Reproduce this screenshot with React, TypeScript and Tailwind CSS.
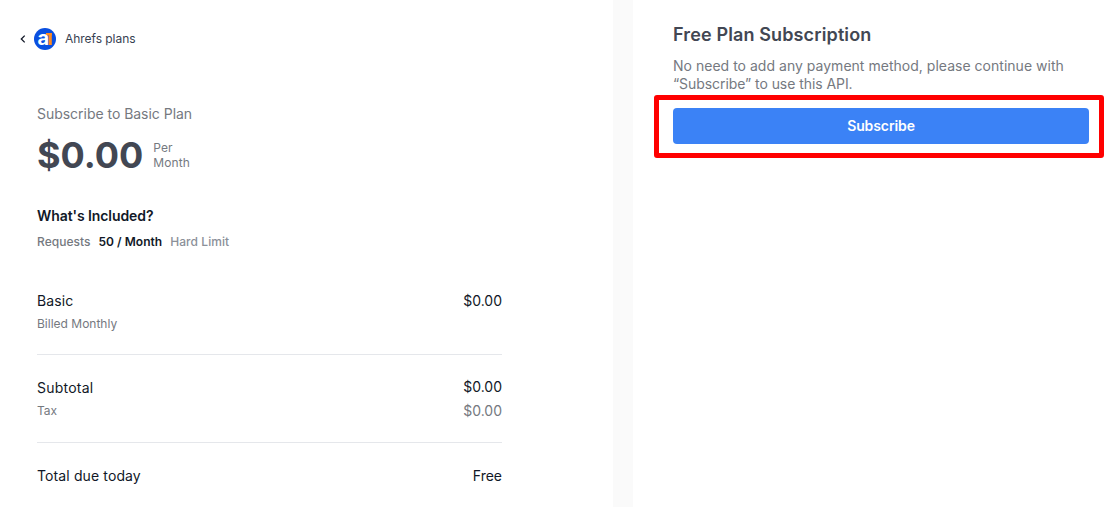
function Logo() {
  return (
    <svg width="22" height="22" viewBox="0 0 22 22" aria-label="Ahrefs" className="shrink-0 overflow-visible">
      <circle cx="11" cy="11" r="11" fill="#0a4fe0" />
      <rect x="12" y="5" width="5.8" height="2.4" fill="#ff8a1f" />
      <rect x="14.6" y="5" width="3.2" height="12" fill="#ff8a1f" />
      <text x="3.4" y="17" fontSize="20" fontWeight="700" fill="#fff" fontFamily="Inter, sans-serif">a</text>
    </svg>
  );
}

export default function App() {
  return (
    <div className="flex h-[507px] w-[1113px] overflow-hidden bg-white font-['Inter',sans-serif] text-[14px] leading-[20px] text-[#111827]">
      <main className="w-[613px] shrink-0 pt-[28px]">
        <div className="flex h-[22px] items-center pl-[18px]">
          <svg width="10" height="10" viewBox="0 0 10 10" className="shrink-0" fill="none" stroke="#111827" strokeWidth="1.3">
            <path d="M6.7 1.6 3.3 5l3.4 3.4" />
          </svg>
          <div className="w-[6px]" />
          <Logo />
          <span className="ml-[9px] text-[12px] tracking-[-0.04px] text-[#374151]">Ahrefs plans</span>
        </div>

        <section className="ml-[37px] w-[465px] pt-[54px]">
          <p className="tracking-[-0.03px] text-[#75797f]">Subscribe to Basic Plan</p>
          <div className="mt-[11px] flex h-[40px] items-center">
            <span className="text-[36px] leading-[40px] font-bold text-[#424753]">$0.00</span>
            <span className="ml-[10px] text-[12px] leading-[15px] tracking-[0.1px] text-[#75797f]">
              Per
              <br />
              Month
            </span>
          </div>
          <h2 className="mt-[31px] font-semibold tracking-[-0.08px]">What's Included?</h2>
          <div className="mt-[6px] flex gap-[8px] text-[12px] font-medium">
            <span className="tracking-[0.03px] text-[#75797f]">Requests</span>
            <span className="font-semibold tracking-[0.03px]">50 / Month</span>
            <span className="tracking-[0.07px] text-[#8b9099]">Hard Limit</span>
          </div>

          <div className="mt-[39px] flex justify-between">
            <span className="tracking-[0.1px]">Basic</span>
            <span>$0.00</span>
          </div>
          <p className="mt-[3px] text-[12px] text-[#75797f]">Billed Monthly</p>
          <hr className="mt-[20px] border-t border-[#e5e7eb]" />

          <div className="mt-[22px] flex justify-between">
            <span className="mt-px tracking-[0.22px]">Subtotal</span>
            <span>$0.00</span>
          </div>
          <div className="mt-[3px] flex justify-between text-[#75797f]">
            <span className="text-[12px]">Tax</span>
            <span>$0.00</span>
          </div>
          <hr className="mt-[21px] border-t border-[#e5e7eb]" />

          <div className="mt-[23px] flex justify-between">
            <span className="tracking-[0.12px]">Total due today</span>
            <span>Free</span>
          </div>
        </section>
      </main>

      <div className="w-[20px] shrink-0 bg-[#fafafa]" />

      <aside className="w-[480px] shrink-0 pt-[21px] pl-[21px]">
        <div className="pl-[19px]">
          <h1 className="text-[18px] leading-[28px] font-semibold tracking-[0.13px] text-[#424753]">Free Plan Subscription</h1>
          <p className="mt-[8px] leading-[18px] text-[#75797f]">
            <span className="tracking-[0.02px]">No need to add any payment method, please continue with</span>
            <br />
            <span className="tracking-[-0.06px]">“Subscribe” to use this API.</span>
          </p>
        </div>
        <div className="mt-[2px] h-[63px] w-[450px] rounded-[3px] border-[5px] border-[#ff0000] pt-[8px] pl-[14px]">
          <button className="h-[36px] w-[416px] rounded-[4px] bg-[#3b82f6] font-semibold tracking-[-0.1px] text-white">Subscribe</button>
        </div>
      </aside>
    </div>
  );
}
